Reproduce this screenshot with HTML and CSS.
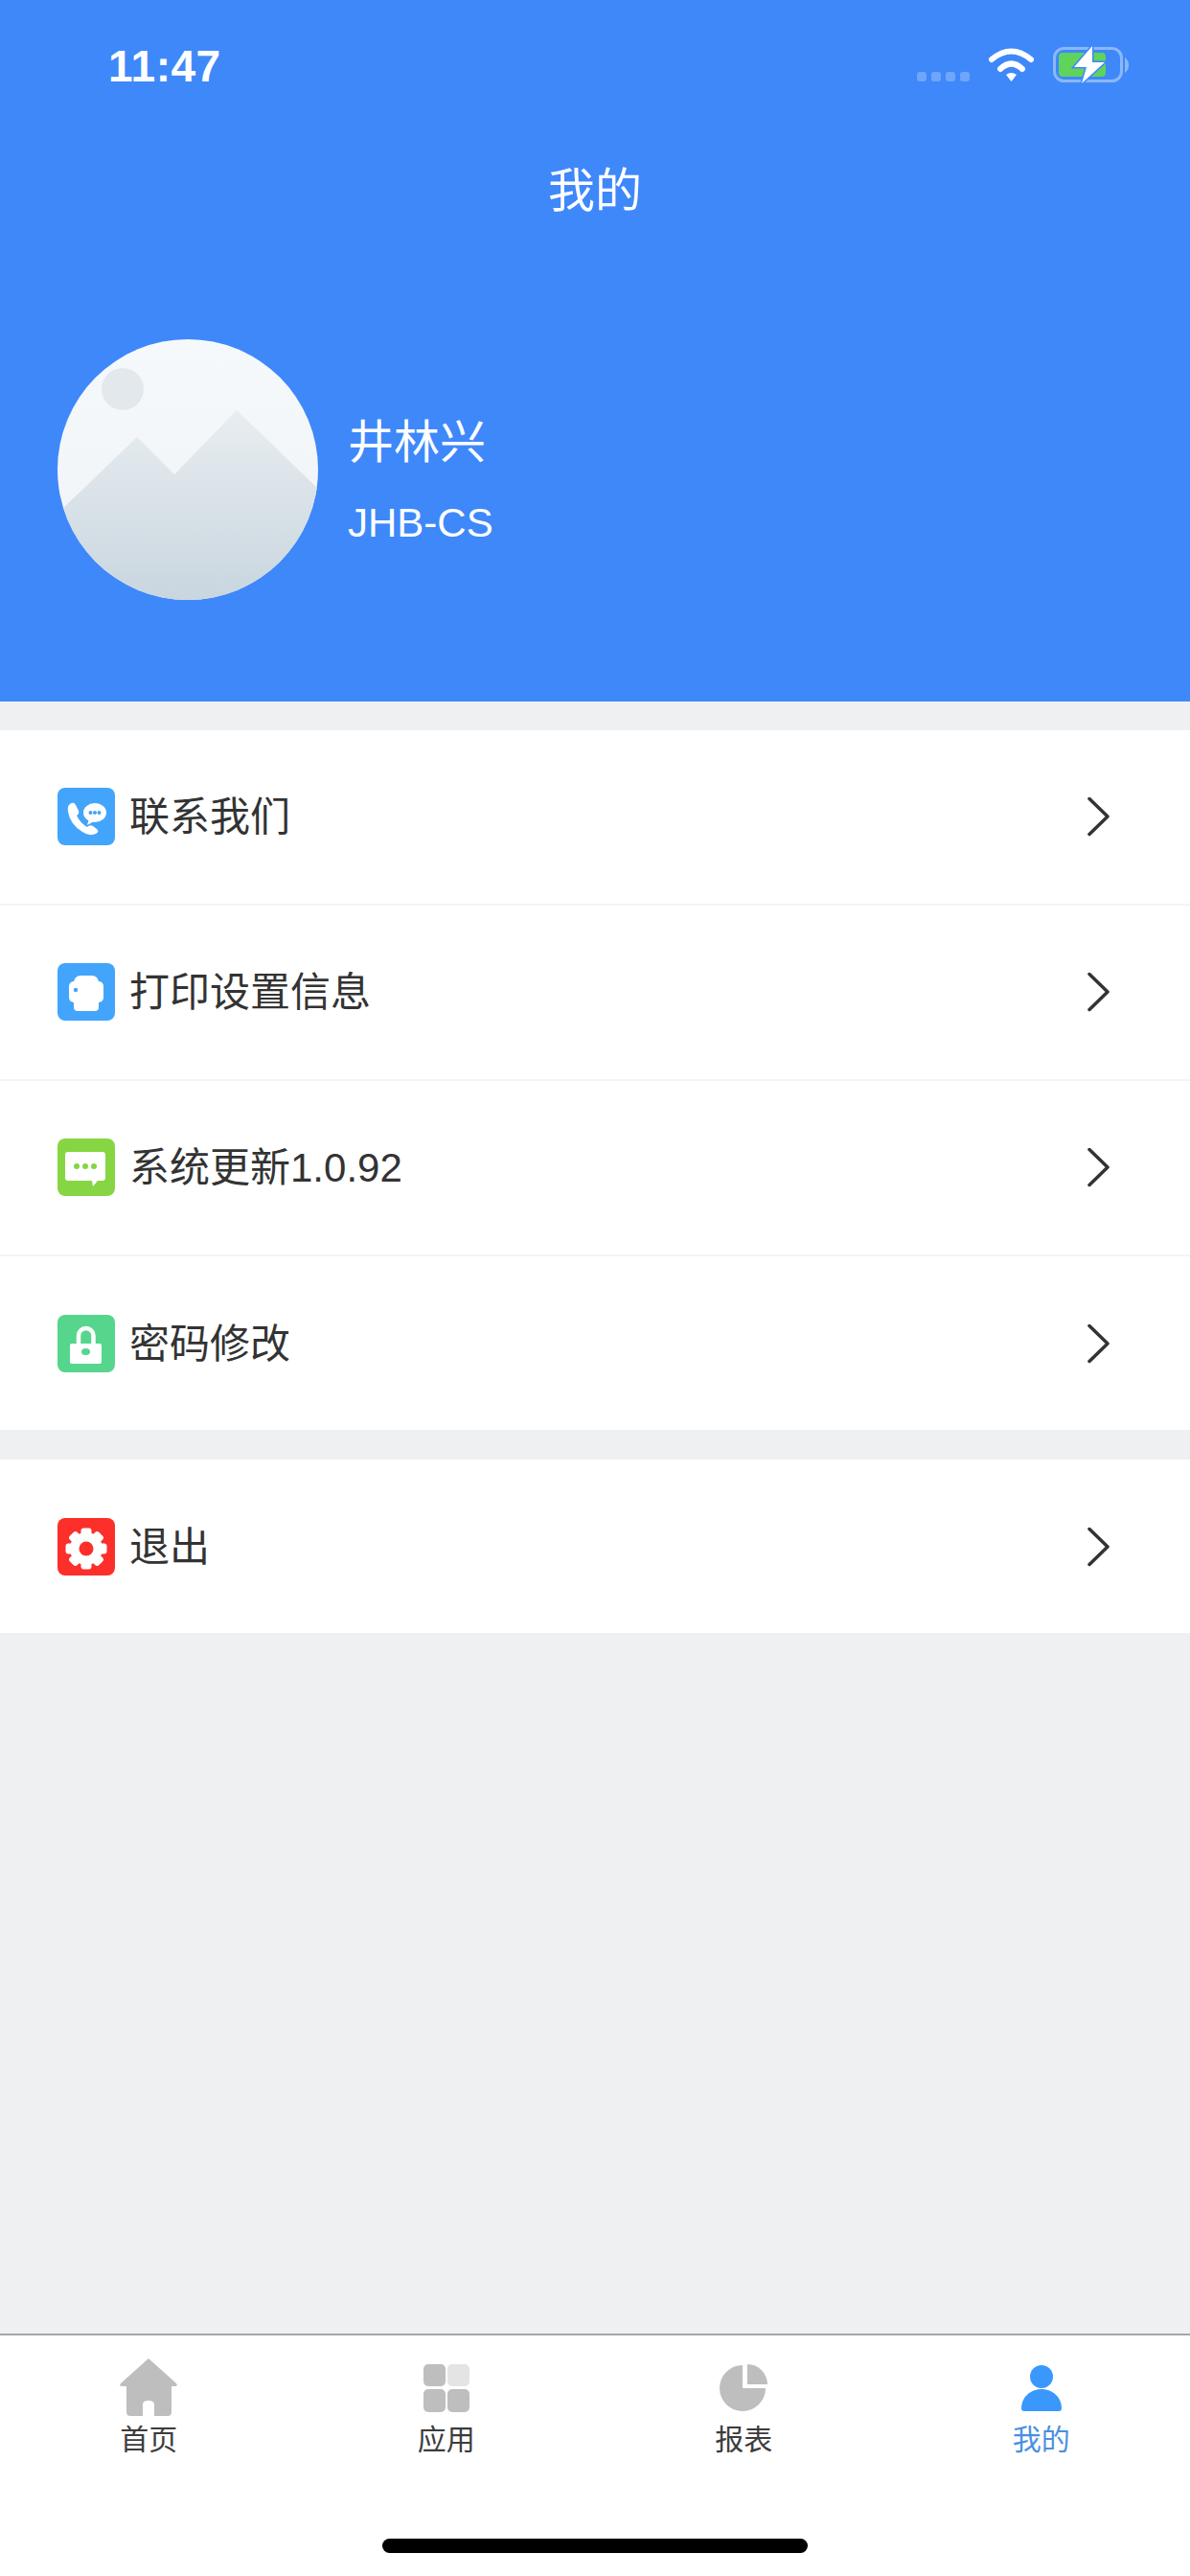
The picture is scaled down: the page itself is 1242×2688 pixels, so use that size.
FILE: index.html
```html
<!DOCTYPE html>
<html lang="zh-CN">
<head>
    <meta charset="UTF-8">
    <title>我的</title>
    <link rel="stylesheet" href="styles.css">
</head>
<body>
<div class="page">
    <header class="header">
        <div class="status-bar">
            <span class="time">11:47</span>
            <svg class="status-icons" width="221" height="46" viewBox="0 0 221 46">
                <g fill="#fff" opacity="0.25">
                    <rect x="0" y="29" width="10" height="10" rx="3"/>
                    <rect x="15" y="29" width="10" height="10" rx="3"/>
                    <rect x="30" y="29" width="10" height="10" rx="3"/>
                    <rect x="45" y="29" width="10" height="10" rx="3"/>
                </g>
                <path d="M78 16Q98.5 -1 119 16" fill="none" stroke="#fff" stroke-width="6" stroke-linecap="round"/>
                <path d="M87 26Q98.5 15 110 26" fill="none" stroke="#fff" stroke-width="6" stroke-linecap="round"/>
                <path d="M93 32Q98.5 28 104 32L98.5 39Z" fill="#fff"/>
                <rect x="143.500" y="4.500" width="70" height="34" rx="10" fill="none" stroke="#fff" stroke-opacity="0.4" stroke-width="3"/>
                <rect x="148" y="9" width="49" height="25" rx="4" fill="#5fd35c"/>
                <path d="M217 14c3 2 4 5 4 8s-1 6-4 8z" fill="#fff" opacity="0.4"/>
                <path d="M183 2L164 24H177L172 41L196 19H183Z" fill="#fff" stroke="#3e88fa" stroke-width="3" paint-order="stroke"/>
            </svg>
        </div>
        <h1 class="title">我的</h1>
        <div class="profile">
            <svg class="avatar" width="272" height="272" viewBox="0 0 272 272">
                <defs>
                    <linearGradient id="sky" x1="0" y1="0" x2="0" y2="1">
                        <stop offset="0" stop-color="#f6f9fb"/>
                        <stop offset="1" stop-color="#eff3f6"/>
                    </linearGradient>
                    <linearGradient id="hill" x1="0" y1="0" x2="0" y2="1">
                        <stop offset="0" stop-color="#e8edf0"/>
                        <stop offset="1" stop-color="#c9d6df"/>
                    </linearGradient>
                </defs>
                <rect width="272" height="272" fill="url(#sky)"/>
                <circle cx="68" cy="52" r="22" fill="#e2e8ec"/>
                <path d="M0 182L83 102L122 141L187 74L272 156V272H0Z" fill="url(#hill)"/>
            </svg>
            <div class="profile-text">
                <div class="name">井林兴</div>
                <div class="code">JHB-CS</div>
            </div>
        </div>
    </header>

    <main class="content">
        <section class="group">
            <a class="row">
                <svg class="row-icon" viewBox="0 0 60 60">
                    <rect width="60" height="60" rx="8" fill="#42a5fb"/>
                    <path d="M13 17Q17 14 19 18L22 24Q23 27 20 29Q24 37 31 41Q34 38 37 40L41 43Q44 46 40 48Q33 51 26 46Q13 38 11 25Q10 19 13 17Z" fill="#fff"/>
                    <ellipse cx="39" cy="26" rx="12" ry="10" fill="#fff"/>
                    <path d="M33 32L31 39L40 34Z" fill="#fff"/>
                    <circle cx="34.500" cy="26" r="2" fill="#42a5fb"/>
                    <circle cx="39" cy="26" r="2" fill="#42a5fb"/>
                    <circle cx="43.500" cy="26" r="2" fill="#42a5fb"/>
                </svg>
                <span class="row-label">联系我们</span>
                <svg class="chevron" width="24" height="42" viewBox="0 0 24 42"><path d="M2 2.500L21 21L2 39.500" fill="none" stroke="#333" stroke-width="3.500" stroke-linecap="round" stroke-linejoin="round"/></svg>
            </a>
            <a class="row">
                <svg class="row-icon" viewBox="0 0 60 60">
                    <rect width="60" height="60" rx="8" fill="#42a5fb"/>
                    <rect x="17" y="13" width="26" height="20" rx="7" fill="#fff"/>
                    <rect x="12" y="19" width="36" height="22" rx="5" fill="#fff"/>
                    <rect x="17" y="28" width="26" height="22" rx="4" fill="#fff"/>
                    <circle cx="19" cy="28" r="2.200" fill="#42a5fb"/>
                </svg>
                <span class="row-label">打印设置信息</span>
                <svg class="chevron" width="24" height="42" viewBox="0 0 24 42"><path d="M2 2.500L21 21L2 39.500" fill="none" stroke="#333" stroke-width="3.500" stroke-linecap="round" stroke-linejoin="round"/></svg>
            </a>
            <a class="row">
                <svg class="row-icon" viewBox="0 0 60 60">
                    <rect width="60" height="60" rx="8" fill="#86d644"/>
                    <path d="M11 14H47a3 3 0 0 1 3 3V41a3 3 0 0 1-3 3H42L37 50L36 44H11a3 3 0 0 1-3-3V17a3 3 0 0 1 3-3z" fill="#fff"/>
                    <circle cx="20" cy="29" r="3" fill="#86d644"/>
                    <circle cx="29" cy="29" r="3" fill="#86d644"/>
                    <circle cx="38" cy="29" r="3" fill="#86d644"/>
                </svg>
                <span class="row-label">系统更新1.0.92</span>
                <svg class="chevron" width="24" height="42" viewBox="0 0 24 42"><path d="M2 2.500L21 21L2 39.500" fill="none" stroke="#333" stroke-width="3.500" stroke-linecap="round" stroke-linejoin="round"/></svg>
            </a>
            <a class="row">
                <svg class="row-icon" viewBox="0 0 60 60">
                    <rect width="60" height="60" rx="8" fill="#56d68c"/>
                    <path d="M22 33V21.750a7.750 7.750 0 0 1 15.500 0V33" fill="none" stroke="#fff" stroke-width="4.500"/>
                    <rect x="13" y="30" width="33" height="21" rx="2" fill="#fff"/>
                    <ellipse cx="29.500" cy="38.500" rx="4.500" ry="3.500" fill="#56d68c"/>
                </svg>
                <span class="row-label">密码修改</span>
                <svg class="chevron" width="24" height="42" viewBox="0 0 24 42"><path d="M2 2.500L21 21L2 39.500" fill="none" stroke="#333" stroke-width="3.500" stroke-linecap="round" stroke-linejoin="round"/></svg>
            </a>
        </section>

        <section class="group">
            <a class="row">
                <svg class="row-icon" viewBox="0 0 60 60">
                    <rect width="60" height="60" rx="8" fill="#fc2f2a"/>
                    <g fill="#fff">
                        <rect x="24.500" y="10.500" width="11" height="12" rx="3"/>
                        <rect x="24.500" y="10.500" width="11" height="12" rx="3" transform="rotate(45 30 32)"/>
                        <rect x="24.500" y="10.500" width="11" height="12" rx="3" transform="rotate(90 30 32)"/>
                        <rect x="24.500" y="10.500" width="11" height="12" rx="3" transform="rotate(135 30 32)"/>
                        <rect x="24.500" y="10.500" width="11" height="12" rx="3" transform="rotate(180 30 32)"/>
                        <rect x="24.500" y="10.500" width="11" height="12" rx="3" transform="rotate(225 30 32)"/>
                        <rect x="24.500" y="10.500" width="11" height="12" rx="3" transform="rotate(270 30 32)"/>
                        <rect x="24.500" y="10.500" width="11" height="12" rx="3" transform="rotate(315 30 32)"/>
                        <circle cx="30" cy="32" r="17"/>
                    </g>
                    <circle cx="30" cy="32" r="7.500" fill="#fc2f2a"/>
                </svg>
                <span class="row-label">退出</span>
                <svg class="chevron" width="24" height="42" viewBox="0 0 24 42"><path d="M2 2.500L21 21L2 39.500" fill="none" stroke="#333" stroke-width="3.500" stroke-linecap="round" stroke-linejoin="round"/></svg>
            </a>
        </section>
    </main>

    <nav class="tabbar">
        <div class="tabs">
            <a class="tab">
                <svg class="tab-icon" width="62" height="60" viewBox="0 0 62 60">
                    <path d="M31 0L60 26Q62 29 59 29H55V56Q55 60 51 60H37V48Q37 44 31 44Q25 44 25 48V60H12Q8 60 8 56V29H3Q0 29 2 26Z" fill="#bebebe"/>
                </svg>
                <span class="tab-label">首页</span>
            </a>
            <a class="tab">
                <svg class="tab-icon" width="50" height="60" viewBox="0 0 50 60">
                    <rect x="1" y="6" width="23" height="23" rx="5" fill="#bebebe"/>
                    <rect x="26" y="6" width="23" height="23" rx="5" fill="#e4e4e4"/>
                    <rect x="1" y="32" width="23" height="24" rx="5" fill="#bebebe"/>
                    <rect x="26" y="32" width="23" height="24" rx="5" fill="#bebebe"/>
                </svg>
                <span class="tab-label">应用</span>
            </a>
            <a class="tab">
                <svg class="tab-icon" width="52" height="60" viewBox="0 0 52 60">
                    <path d="M25 7A24 24 0 1 0 49 31H25Z" fill="#bebebe"/>
                    <path d="M30 6A21 21 0 0 1 51 27H30Z" fill="#bebebe"/>
                </svg>
                <span class="tab-label">报表</span>
            </a>
            <a class="tab tab-active">
                <svg class="tab-icon" width="44" height="60" viewBox="0 0 44 60">
                    <circle cx="22" cy="19" r="12" fill="#3a98fd"/>
                    <path d="M22 32C34 32 43 41 43 52Q43 55 40 55H4Q1 55 1 52C1 41 10 32 22 32Z" fill="#3a98fd"/>
                </svg>
                <span class="tab-label">我的</span>
            </a>
        </div>
        <div class="home-indicator"></div>
    </nav>
</div>
</body>
</html>
```

FILE: styles.css
```css
* {
    box-sizing: border-box;
}

body {
    margin: 0;
    font-family: "Liberation Sans", "Noto Sans CJK SC", sans-serif;
    color: #333;
    background: #eff0f2;
}

.page {
    display: flex;
    flex-direction: column;
    height: 2688px;
}

.header {
    height: 732px;
    background: #3e88fa;
    color: #fff;
}

.status-bar {
    display: flex;
    justify-content: space-between;
    height: 139px;
    padding: 46px 64px 0 113px;
}

.time {
    font-size: 46px;
    font-weight: 700;
    line-height: 46px;
    letter-spacing: 0.5px;
}

.title {
    margin: 0;
    font-size: 49px;
    font-weight: 400;
    line-height: 120px;
    text-align: center;
}

.profile {
    display: flex;
    align-items: center;
    gap: 31px;
    margin-top: 95px;
    padding-left: 60px;
}

.avatar {
    display: block;
    border-radius: 50%;
}

.profile-text {
    padding-top: 27px;
}

.name {
    font-size: 48px;
    line-height: 60px;
}

.code {
    margin-top: 24px;
    font-size: 42px;
    line-height: 60px;
}

.content {
    flex: 1;
    padding-top: 30px;
}

.group {
    margin-bottom: 31px;
    background: #fff;
}

.row {
    display: flex;
    align-items: center;
    height: 183px;
    padding: 0 83px 2px 60px;
    border-bottom: 2px solid #f4f4f4;
}

.group .row:last-child {
    height: 181px;
    padding-bottom: 0;
    border-bottom: none;
}

.row-icon {
    display: block;
    flex: none;
    width: 60px;
    height: 60px;
}

.row-label {
    flex: 1;
    margin-left: 15px;
    padding-top: 3px;
    font-size: 42px;
    line-height: 60px;
}

.chevron {
    display: block;
    flex: none;
}

.tabbar {
    height: 253px;
    background: #fff;
    border-top: 2px solid #a6a6a6;
}

.tabs {
    display: grid;
    grid-template-columns: repeat(4, 1fr);
    padding-top: 24px;
}

.tab {
    display: flex;
    flex-direction: column;
    align-items: center;
}

.tab-icon {
    display: block;
}

.tab-label {
    margin-top: 7px;
    font-size: 30px;
    line-height: 36px;
    color: #3c3c3c;
}

.tab-active .tab-label {
    color: #4a90e2;
}

.home-indicator {
    width: 444px;
    height: 15px;
    margin: 85px auto 0;
    border-radius: 8px;
    background: #000;
}
```
